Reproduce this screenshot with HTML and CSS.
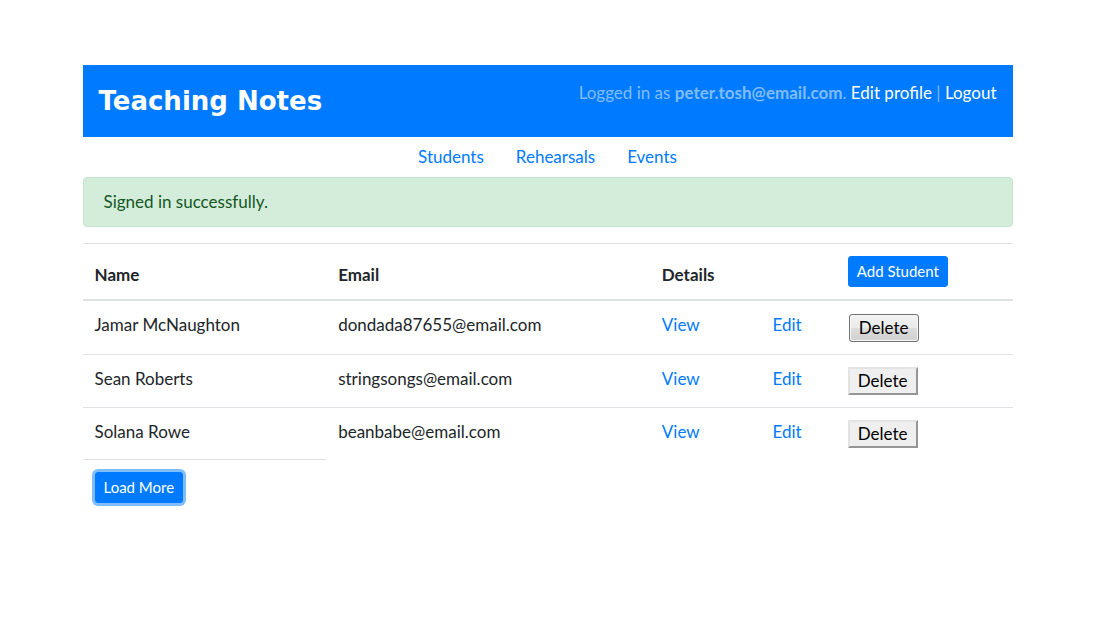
FILE: index.html
```html
<!DOCTYPE html>
<html lang="en">
<head>
<meta charset="utf-8">
<meta name="viewport" content="width=device-width, initial-scale=1">
<title>Teaching Notes</title>
<link rel="stylesheet" href="styles.css">
</head>
<body>
<div class="container">
  <header class="header">
    <h1 class="brand">Teaching Notes</h1>
    <p class="account">Logged in as <strong>peter.tosh@email.com</strong>. <a href="#">Edit profile</a> | <a href="#">Logout</a></p>
  </header>
  <nav class="nav">
    <a href="#">Students</a>
    <a href="#">Rehearsals</a>
    <a href="#">Events</a>
  </nav>
  <main>
    <div class="alert" role="status">Signed in successfully.</div>
    <table class="students">
      <colgroup>
        <col class="col-name"><col class="col-email"><col class="col-view"><col class="col-edit"><col class="col-delete">
      </colgroup>
      <thead>
        <tr>
          <th scope="col">Name</th>
          <th scope="col">Email</th>
          <th scope="col" colspan="2">Details</th>
          <th><a class="btn" href="#">Add Student</a></th>
        </tr>
      </thead>
      <tbody>
        <tr>
          <td>Jamar McNaughton</td>
          <td>dondada87655@email.com</td>
          <td><a href="#">View</a></td>
          <td><a href="#">Edit</a></td>
          <td><button class="delete delete-hover" type="button">Delete</button></td>
        </tr>
        <tr>
          <td>Sean Roberts</td>
          <td>stringsongs@email.com</td>
          <td><a href="#">View</a></td>
          <td><a href="#">Edit</a></td>
          <td><button class="delete" type="button">Delete</button></td>
        </tr>
        <tr>
          <td>Solana Rowe</td>
          <td>beanbabe@email.com</td>
          <td><a href="#">View</a></td>
          <td><a href="#">Edit</a></td>
          <td><button class="delete" type="button">Delete</button></td>
        </tr>
      </tbody>
      <tfoot>
        <tr>
          <td><button class="btn btn-focus" type="button">Load More</button></td>
        </tr>
      </tfoot>
    </table>
  </main>
</div>
</body>
</html>
```
FILE: styles.css
```css
*,
*::before,
*::after {
  box-sizing: border-box;
}

body {
  margin: 0;
  padding-top: 65px;
  background: #fff;
  color: #212529;
  font-family: Lato, "Open Sans", sans-serif;
  font-size: 17px;
  line-height: 24px;
}

a {
  color: #007bff;
  text-decoration: none;
}

.container {
  max-width: 960px;
  margin: 0 auto;
  padding: 0 15px;
}

.header {
  display: flex;
  justify-content: space-between;
  align-items: flex-start;
  padding: 16px;
  background: #007bff;
  color: #80bdff;
}

.brand {
  margin: 0;
  color: #fff;
  font-family: "DejaVu Sans", sans-serif;
  font-size: 26px;
  font-weight: 700;
  line-height: 40px;
}

.account {
  margin: 0;
}

.account a {
  color: #fff;
}

.nav {
  display: flex;
  justify-content: center;
  gap: 32px;
  padding: 8px 16px;
}

.alert {
  margin-bottom: 16px;
  padding: 12px 20px;
  border: 1px solid #c3e6cb;
  border-radius: 4px;
  background: #d4edda;
  color: #155724;
}

.students {
  width: 100%;
  table-layout: fixed;
  border-collapse: separate;
  border-spacing: 0;
}

.col-name { width: 26.2%; }
.col-email { width: 34.8%; }
.col-view { width: 11.9%; }
.col-edit { width: 8.1%; }
.col-delete { width: 19%; }

.students th,
.students td {
  padding: 12px;
  border-top: 1px solid #dee2e6;
  text-align: left;
  vertical-align: top;
}

.students th {
  border-bottom: 2px solid #dee2e6;
  vertical-align: bottom;
}

.students tbody tr:first-child td {
  border-top: 0;
}

.students tbody tr:last-child td {
  padding-bottom: 11px;
}

.btn {
  display: block;
  width: fit-content;
  padding: 4px 8px;
  border: 1px solid #007bff;
  border-radius: 3px;
  background: #007bff;
  color: #fff;
  font-family: inherit;
  font-size: 15px;
  font-weight: 400;
  line-height: 21px;
}

.btn-focus {
  outline: 0;
  box-shadow: 0 0 0 3px #80bdff;
}

.delete {
  display: block;
  height: 28px;
  padding: 0 8px;
  border: 2px solid;
  border-color: #e3e3e3 #969696 #969696 #e3e3e3;
  background: #efefef;
  color: #000;
  font-family: inherit;
  font-size: 17px;
  line-height: 24px;
}

.delete-hover {
  margin: 1px 0 0 1px;
  padding: 0 9px;
  border: 1px solid #707070;
  border-radius: 3px;
  background: linear-gradient(#f2f2f2, #ebebeb 50%, #dddddd 50%, #cfcfcf);
  box-shadow: inset 0 0 0 1px #f8f8f8;
}
```
